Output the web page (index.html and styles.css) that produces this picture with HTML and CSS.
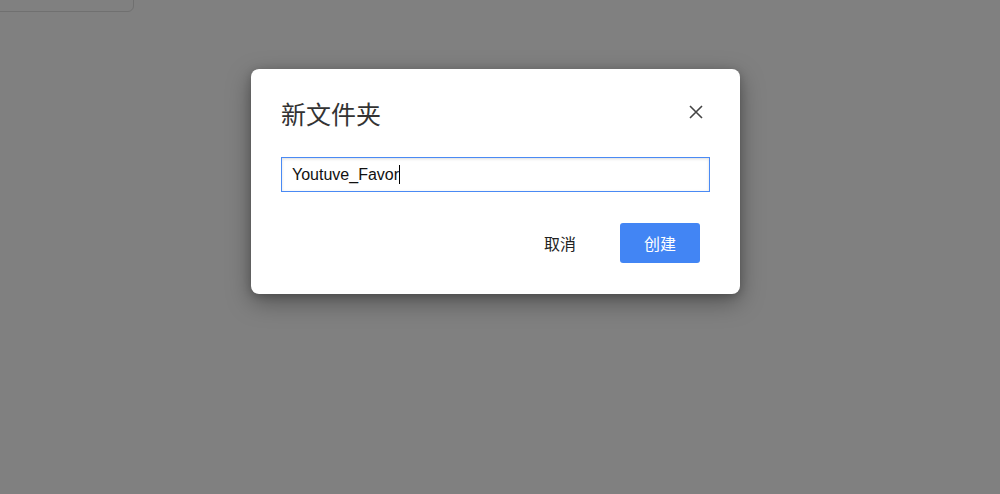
FILE: index.html
```html
<!DOCTYPE html>
<html>
<head>
<meta charset="utf-8">
<link rel="stylesheet" href="styles.css">
</head>
<body>
<div class="page">
  <div class="bg-card"></div>
  <div class="dialog">
    <div class="head">
      <h1 class="title">新文件夹</h1>
      <button class="close" aria-label="关闭">
        <svg width="14" height="14" viewBox="0 0 14 14"><path d="M1 1L13 13M13 1L1 13" stroke="#444" stroke-width="1.6" fill="none"/></svg>
      </button>
    </div>
    <div class="field-wrap"><div class="field"><span class="value">Youtuve_Favor</span><span class="caret"></span></div></div>
    <div class="actions">
      <button class="btn cancel">取消</button>
      <button class="btn create">创建</button>
    </div>
  </div>
</div>
</body>
</html>
```

FILE: styles.css
```css
* { box-sizing: border-box; }
html, body { margin: 0; padding: 0; }
body {
  width: 1000px;
  height: 494px;
  background: #808080;
  font-family: "Liberation Sans", Arial, "Noto Sans CJK SC", sans-serif;
  overflow: hidden;
}
.page { position: relative; width: 1000px; height: 494px; padding-top: 69px; padding-left: 251px; }
.bg-card {
  position: absolute;
  left: -10px; top: -10px;
  width: 144px; height: 22px;
  border: 1px solid #707070;
  border-radius: 6px;
}
.dialog {
  width: 489px;
  height: 225px;
  background: #fff;
  border-radius: 8px;
  box-shadow: 0 8px 24px rgba(0,0,0,0.35), 0 2px 8px rgba(0,0,0,0.2);
  padding: 28px 30px 0 30px;
}
.head { display: flex; justify-content: space-between; align-items: flex-start; height: 60px; }
.title {
  margin: 0;
  font-weight: normal;
  font-size: 25px;
  line-height: 32px;
  color: #333;
  font-family: "Noto Sans CJK SC", sans-serif;
}
.close {
  border: 0; background: none; padding: 0; margin: 8px 7px 0 0;
  width: 14px; height: 14px; display: block;
}
.close svg { display: block; }
.field-wrap {
  width: 429px;
  height: 35px;
  background: #4a8af4;
  padding: 1px;
}
.field {
  width: 100%;
  height: 100%;
  background: #fff;
  box-shadow: inset 0 1px 3px rgba(0,0,0,0.14);
  display: flex;
  align-items: center;
  padding-left: 10px;
  font-size: 16px;
  color: #111;
}
.caret { display: inline-block; width: 1px; height: 19px; background: #000; }
.actions { display: flex; justify-content: flex-end; align-items: center; margin-top: 31px; padding-right: 10px; gap: 20px; }
.btn {
  border: 0;
  font-family: "Noto Sans CJK SC", sans-serif;
  font-size: 16px;
  height: 40px;
  width: 80px;
  border-radius: 3px;
  cursor: pointer;
}
.cancel { background: none; color: #222; }
.create { background: #4285f4; color: #fff; }
```
